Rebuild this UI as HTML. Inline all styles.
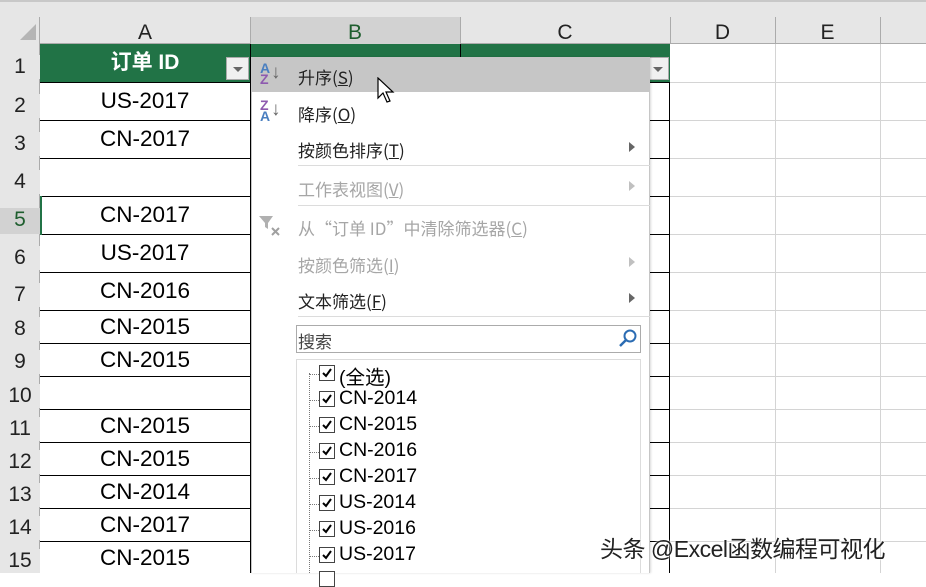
<!DOCTYPE html>
<html><head><meta charset="utf-8"><style>
*{margin:0;padding:0;box-sizing:border-box}
body{width:926px;height:573px;overflow:hidden;background:#fff;position:relative;font-family:"Liberation Sans","Noto Sans CJK SC",sans-serif}
.a{position:absolute}
.hl{position:absolute;height:1px}
.vl{position:absolute;width:1px}
.rn{position:absolute;left:0;width:40px;text-align:center;font-size:21px;color:#222;background:#e6e6e6}
.cell{position:absolute;left:40px;width:210px;text-align:center;font-size:22.5px;color:#000}
.mi{position:absolute;left:298px;font-size:17px;color:#222;font-family:"Noto Sans CJK SC",sans-serif}
.dis{color:#a6a6a6}
.arr{position:absolute;left:629px;width:0;height:0;border-top:5px solid transparent;border-bottom:5px solid transparent;border-left:6px solid #666}
.li{position:absolute;left:339px;font-size:19.5px;color:#000;font-family:"Liberation Sans","Noto Sans CJK SC",sans-serif}
.cb{position:absolute;left:319px;width:16px;height:16px;border:1px solid #444;background:#fff}
.cb svg{position:absolute;left:2px;top:2px}
.dot{position:absolute;left:310px;width:9px;border-top:1px dotted #777}
</style></head><body>
<div class="a" style="left:0;top:0;width:926px;height:17px;background:#e6e6e6;border-top:2px solid #c8c8c8"></div>
<div class="a" style="left:0;top:17px;width:926px;height:27px;background:#e6e6e6;border-bottom:1px solid #ababab"></div>
<div class="a" style="left:0;top:17px;width:40px;height:556px;background:#e6e6e6;border-right:1px solid #ababab"></div>
<div class="a" style="left:20px;top:24px;width:0;height:0;border-left:16px solid transparent;border-bottom:16px solid #b5b5b5"></div>
<div class="a" style="left:250px;top:17px;width:210px;height:27px;background:#d2d2d2"></div>
<div class="a" style="left:40px;top:17px;width:210px;height:27px;text-align:center;font-size:21px;line-height:31px;color:#222">A</div>
<div class="a" style="left:250px;top:17px;width:210px;height:27px;text-align:center;font-size:21px;line-height:31px;color:#1e5e2e">B</div>
<div class="a" style="left:460px;top:17px;width:210px;height:27px;text-align:center;font-size:21px;line-height:31px;color:#222">C</div>
<div class="a" style="left:670px;top:17px;width:105px;height:27px;text-align:center;font-size:21px;line-height:31px;color:#222">D</div>
<div class="a" style="left:775px;top:17px;width:105px;height:27px;text-align:center;font-size:21px;line-height:31px;color:#222">E</div>
<div class="vl" style="left:250px;top:17px;height:27px;background:#ababab"></div>
<div class="vl" style="left:460px;top:17px;height:27px;background:#ababab"></div>
<div class="vl" style="left:670px;top:17px;height:27px;background:#ababab"></div>
<div class="vl" style="left:775px;top:17px;height:27px;background:#ababab"></div>
<div class="vl" style="left:880px;top:17px;height:27px;background:#ababab"></div>
<div class="vl" style="left:775px;top:44px;height:529px;background:#d4d4d4"></div>
<div class="vl" style="left:880px;top:44px;height:529px;background:#d4d4d4"></div>
<div class="hl" style="left:670px;top:82px;width:256px;background:#d4d4d4"></div>
<div class="hl" style="left:670px;top:120px;width:256px;background:#d4d4d4"></div>
<div class="hl" style="left:670px;top:158px;width:256px;background:#d4d4d4"></div>
<div class="hl" style="left:670px;top:196px;width:256px;background:#d4d4d4"></div>
<div class="hl" style="left:670px;top:234px;width:256px;background:#d4d4d4"></div>
<div class="hl" style="left:670px;top:272px;width:256px;background:#d4d4d4"></div>
<div class="hl" style="left:670px;top:310px;width:256px;background:#d4d4d4"></div>
<div class="hl" style="left:670px;top:343px;width:256px;background:#d4d4d4"></div>
<div class="hl" style="left:670px;top:376px;width:256px;background:#d4d4d4"></div>
<div class="hl" style="left:670px;top:409px;width:256px;background:#d4d4d4"></div>
<div class="hl" style="left:670px;top:442px;width:256px;background:#d4d4d4"></div>
<div class="hl" style="left:670px;top:475px;width:256px;background:#d4d4d4"></div>
<div class="hl" style="left:670px;top:508px;width:256px;background:#d4d4d4"></div>
<div class="hl" style="left:670px;top:541px;width:256px;background:#d4d4d4"></div>
<div class="a" style="left:40px;top:44px;width:630px;height:38px;background:#217346"></div>
<div class="vl" style="left:250px;top:44px;height:38px;background:#000"></div>
<div class="vl" style="left:460px;top:44px;height:38px;background:#000"></div>
<div class="a" style="left:40px;top:44px;width:210px;height:38px;text-align:center;color:#fff;font-weight:bold;font-size:21px;line-height:38px;font-family:'Liberation Sans','Noto Sans CJK SC',sans-serif">订单 ID</div>
<div class="a" style="left:226px;top:57px;width:23px;height:23px;background:#f0f0f0;border:1px solid #aaa"><div style="margin:9px auto 0;width:0;height:0;border-left:5px solid transparent;border-right:5px solid transparent;border-top:5px solid #666"></div></div>
<div class="a" style="left:647px;top:57px;width:22px;height:23px;background:#f0f0f0;border:1px solid #aaa"><div style="margin:9px auto 0;width:0;height:0;border-left:5px solid transparent;border-right:5px solid transparent;border-top:5px solid #666"></div></div>
<div class="vl" style="left:250px;top:82px;height:491px;background:#000"></div>
<div class="vl" style="left:669px;top:82px;height:491px;background:#000"></div>
<div class="hl" style="left:40px;top:82px;width:630px;background:#000"></div>
<div class="hl" style="left:40px;top:120px;width:630px;background:#000"></div>
<div class="hl" style="left:40px;top:158px;width:630px;background:#000"></div>
<div class="hl" style="left:40px;top:196px;width:630px;background:#000"></div>
<div class="hl" style="left:40px;top:234px;width:630px;background:#000"></div>
<div class="hl" style="left:40px;top:272px;width:630px;background:#000"></div>
<div class="hl" style="left:40px;top:310px;width:630px;background:#000"></div>
<div class="hl" style="left:40px;top:343px;width:630px;background:#000"></div>
<div class="hl" style="left:40px;top:376px;width:630px;background:#000"></div>
<div class="hl" style="left:40px;top:409px;width:630px;background:#000"></div>
<div class="hl" style="left:40px;top:442px;width:630px;background:#000"></div>
<div class="hl" style="left:40px;top:475px;width:630px;background:#000"></div>
<div class="hl" style="left:40px;top:508px;width:630px;background:#000"></div>
<div class="hl" style="left:40px;top:541px;width:630px;background:#000"></div>
<div class="vl" style="left:40px;top:196px;height:39px;width:2px;background:#217346"></div>
<div class="rn" style="top:55px">1</div>
<div class="rn" style="top:94px">2</div>
<div class="rn" style="top:132px">3</div>
<div class="rn" style="top:170px">4</div>
<div class="rn" style="top:208px;background:#d2d2d2;color:#1e5e2e;height:26px">5</div>
<div class="rn" style="top:246px">6</div>
<div class="rn" style="top:283px">7</div>
<div class="rn" style="top:317px">8</div>
<div class="rn" style="top:350px">9</div>
<div class="rn" style="top:384px">10</div>
<div class="rn" style="top:417px">11</div>
<div class="rn" style="top:450px">12</div>
<div class="rn" style="top:483px">13</div>
<div class="rn" style="top:516px">14</div>
<div class="rn" style="top:549px">15</div>
<div class="cell" style="top:88px">US-2017</div>
<div class="cell" style="top:126px">CN-2017</div>
<div class="cell" style="top:202px">CN-2017</div>
<div class="cell" style="top:240px">US-2017</div>
<div class="cell" style="top:278px">CN-2016</div>
<div class="cell" style="top:314px">CN-2015</div>
<div class="cell" style="top:347px">CN-2015</div>
<div class="cell" style="top:413px">CN-2015</div>
<div class="cell" style="top:446px">CN-2015</div>
<div class="cell" style="top:479px">CN-2014</div>
<div class="cell" style="top:512px">CN-2017</div>
<div class="cell" style="top:545px">CN-2015</div>
<div class="a" style="left:251px;top:57px;width:399px;height:516px;background:#fff;border-left:1px solid #c6c6c6;border-right:1px solid #c6c6c6;box-shadow:1px 0 2px rgba(0,0,0,.15)"></div>
<div class="a" style="left:252px;top:57px;width:398px;height:35px;background:#c6c6c6"></div>
<div class="a" style="left:260px;top:63px;font-size:14px;font-weight:bold;line-height:11px;color:#4a7fc0">A<br><span style="color:#8e5aaf">Z</span></div>
<div class="a" style="left:271px;top:62px;font-size:19px;color:#666">↓</div>
<div class="a" style="left:260px;top:100px;font-size:14px;font-weight:bold;line-height:11px;color:#8e5aaf">Z<br><span style="color:#4a7fc0">A</span></div>
<div class="a" style="left:271px;top:99px;font-size:19px;color:#666">↓</div>
<div class="mi" style="top:64px">升序(<u>S</u>)</div>
<div class="mi" style="top:101px">降序(<u>O</u>)</div>
<div class="mi" style="top:137px">按颜色排序(<u>T</u>)</div>
<div class="arr" style="top:142px"></div>
<div class="hl" style="left:298px;top:165px;width:352px;background:#dcdcdc"></div>
<div class="mi dis" style="top:176px">工作表视图(<u>V</u>)</div>
<div class="arr" style="top:181px;border-left-color:#c0c0c0"></div>
<div class="hl" style="left:298px;top:205px;width:352px;background:#dcdcdc"></div>
<svg class="a" style="left:258px;top:214px" width="24" height="24"><path d="M1 2h14l-5 7v6l-3-2v-4z" fill="#b0b0b0"/><path d="M14 14l7 7M21 14l-7 7" stroke="#a0a0a0" stroke-width="2"/></svg>
<div class="mi dis" style="top:215px">从“订单 ID”中清除筛选器(<u>C</u>)</div>
<div class="mi dis" style="top:252px">按颜色筛选(<u>I</u>)</div>
<div class="arr" style="top:257px;border-left-color:#c0c0c0"></div>
<div class="mi" style="top:288px">文本筛选(<u>F</u>)</div>
<div class="arr" style="top:293px"></div>
<div class="hl" style="left:298px;top:316px;width:352px;background:#dcdcdc"></div>
<div class="a" style="left:296px;top:325px;width:345px;height:28px;border:1px solid #ababab"></div>
<div class="mi" style="left:298px;top:328px;color:#444">搜索</div>
<svg class="a" style="left:618px;top:328px" width="20" height="20"><circle cx="12" cy="8" r="5.5" fill="none" stroke="#2b6cb3" stroke-width="2"/><path d="M8 12L2 18" stroke="#2b6cb3" stroke-width="2.5"/></svg>
<div class="a" style="left:296px;top:359px;width:345px;height:214px;border:1px solid #dcdcdc;border-bottom:none"></div>
<div class="vl" style="left:309px;top:373px;height:200px;border-left:1px dotted #777;background:none"></div>
<div class="dot" style="top:374px"></div><div class="cb" style="top:365px"><svg width="10" height="10"><path d="M1 5l3 3 5-7" fill="none" stroke="#000" stroke-width="2"/></svg></div><div class="li" style="top:361px">(全选)</div>
<div class="dot" style="top:400px"></div><div class="cb" style="top:391px"><svg width="10" height="10"><path d="M1 5l3 3 5-7" fill="none" stroke="#000" stroke-width="2"/></svg></div><div class="li" style="top:387px">CN-2014</div>
<div class="dot" style="top:426px"></div><div class="cb" style="top:417px"><svg width="10" height="10"><path d="M1 5l3 3 5-7" fill="none" stroke="#000" stroke-width="2"/></svg></div><div class="li" style="top:413px">CN-2015</div>
<div class="dot" style="top:452px"></div><div class="cb" style="top:443px"><svg width="10" height="10"><path d="M1 5l3 3 5-7" fill="none" stroke="#000" stroke-width="2"/></svg></div><div class="li" style="top:439px">CN-2016</div>
<div class="dot" style="top:478px"></div><div class="cb" style="top:469px"><svg width="10" height="10"><path d="M1 5l3 3 5-7" fill="none" stroke="#000" stroke-width="2"/></svg></div><div class="li" style="top:465px">CN-2017</div>
<div class="dot" style="top:504px"></div><div class="cb" style="top:495px"><svg width="10" height="10"><path d="M1 5l3 3 5-7" fill="none" stroke="#000" stroke-width="2"/></svg></div><div class="li" style="top:491px">US-2014</div>
<div class="dot" style="top:530px"></div><div class="cb" style="top:521px"><svg width="10" height="10"><path d="M1 5l3 3 5-7" fill="none" stroke="#000" stroke-width="2"/></svg></div><div class="li" style="top:517px">US-2016</div>
<div class="dot" style="top:556px"></div><div class="cb" style="top:547px"><svg width="10" height="10"><path d="M1 5l3 3 5-7" fill="none" stroke="#000" stroke-width="2"/></svg></div><div class="li" style="top:543px">US-2017</div>
<div class="cb" style="top:571px"></div>
<svg class="a" style="left:377px;top:77px" width="22" height="28"><path d="M1 1v20l5-5 4 9 3-1-4-9h7z" fill="#fff" stroke="#000" stroke-width="1.2"/></svg>
<div class="a" style="left:600px;top:530px;font-size:23px;letter-spacing:-0.5px;color:#222;font-family:'Liberation Sans','Noto Sans CJK SC',sans-serif;text-shadow:0 0 2px #fff,0 0 2px #fff;white-space:nowrap">头条 @Excel函数编程可视化</div>
</body></html>
